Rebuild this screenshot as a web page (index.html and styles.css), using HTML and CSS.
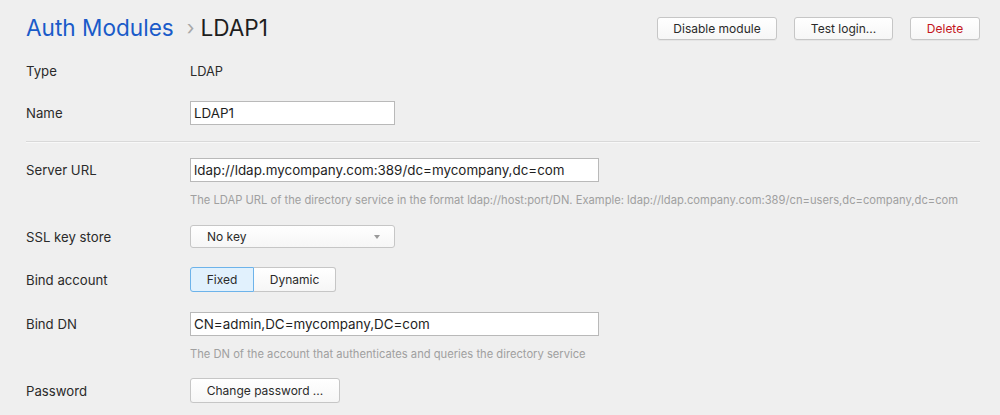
FILE: index.html
```html
<!DOCTYPE html>
<html>
<head>
<meta charset="utf-8">
<link rel="stylesheet" href="styles.css">
</head>
<body>
<div class="page">
  <header class="header">
    <h1 class="title"><span class="crumb">Auth Modules</span><span class="sep">›</span><span class="current">LDAP1</span></h1>
    <div class="actions">
      <button class="btn btn-disable">Disable module</button>
      <button class="btn btn-test">Test login...</button>
      <button class="btn btn-delete">Delete</button>
    </div>
  </header>

  <div class="row row-type">
    <div class="label">Type</div>
    <div class="value">LDAP</div>
  </div>
  <div class="row row-name">
    <div class="label">Name</div>
    <input class="input input-short" type="text" value="LDAP1">
  </div>

  <div class="divider"></div>

  <div class="row row-url">
    <div class="label">Server URL</div>
    <input class="input input-long" type="text" value="ldap://ldap.mycompany.com:389/dc=mycompany,dc=com">
  </div>
  <div class="help help-url">The LDAP URL of the directory service in the format ldap://host:port/DN. Example: ldap://ldap.company.com:389/cn=users,dc=company,dc=com</div>

  <div class="row row-ssl">
    <div class="label">SSL key store</div>
    <div class="select"><span>No key</span><span class="caret"></span></div>
  </div>

  <div class="row row-bind">
    <div class="label">Bind account</div>
    <div class="segmented">
      <button class="seg seg-active">Fixed</button><button class="seg">Dynamic</button>
    </div>
  </div>

  <div class="row row-dn">
    <div class="label">Bind DN</div>
    <input class="input input-long" type="text" value="CN=admin,DC=mycompany,DC=com">
  </div>
  <div class="help help-dn">The DN of the account that authenticates and queries the directory service</div>

  <div class="row row-pass">
    <div class="label">Password</div>
    <button class="btn btn-pass">Change password ...</button>
  </div>
</div>
</body>
</html>
```
FILE: styles.css
```css
* { box-sizing: border-box; }
html, body {
  margin: 0;
  padding: 0;
  background: #efefef;
}
body {
  font-family: Inter, "Liberation Sans", sans-serif;
  font-size: 12px;
  color: #2a2a2a;
}
.page {
  padding: 0 20px 0 26px;
}
.header {
  display: flex;
  justify-content: space-between;
  align-items: flex-start;
  height: 56px;
}
.title {
  margin: 13px 0 0 0;
  font-weight: 400;
  font-size: 22.6px;
  line-height: 30px;
  display: flex;
  align-items: center;
}
.crumb { color: #1a5bc9; }
.sep {
  color: #a8a8a8;
  font-size: 20px;
  margin: 0 6px 0 13px;
}
.current { color: #1e1e1e; }
.actions {
  display: flex;
  gap: 17px;
  margin-top: 17px;
}
.btn {
  font-family: inherit;
  font-size: 12px;
  color: #2a2a2a;
  height: 23px;
  padding: 0 15px;
  border: 1px solid #c6c6c6;
  border-radius: 3px;
  background: linear-gradient(#ffffff, #f6f6f6);
  box-shadow: 0 1px 0 rgba(0,0,0,0.04);
}
.btn-disable { width: 120px; }
.btn-test { width: 99px; }
.btn-delete { width: 70px; color: #c4161c; }

.row {
  display: flex;
  align-items: center;
}
.label {
  width: 164px;
  flex: none;
  font-size: 13.2px;
  color: #2a2a2a;
}
.value { font-size: 12.8px; }
.row-type { height: 24px; margin-top: 3px; }
.row-name { height: 24px; margin-top: 18px; }
.divider {
  height: 1px;
  background: #d9d9d9;
  border-bottom: 1px solid #f8f8f8;
  margin-top: 16px;
  box-sizing: content-box;
}
.row-url { height: 24px; margin-top: 15px; }
.input {
  font-family: inherit;
  font-size: 13.4px;
  color: #1e1e1e;
  height: 24px;
  border: 1px solid #b9b9b9;
  background: #fff;
  padding: 0 3px;
  outline: none;
}
.input-short { width: 205px; }
.input-long { width: 409px; }
.help {
  margin-left: 164px;
  font-size: 11.2px;
  color: #a0a0a0;
  line-height: 14px;
}
.help-url { margin-top: 11px; }
.row-ssl { height: 23px; margin-top: 18px; }
.select {
  width: 205px;
  height: 23px;
  border: 1px solid #c6c6c6;
  border-radius: 3px;
  background: linear-gradient(#ffffff, #f6f6f6);
  display: flex;
  align-items: center;
  justify-content: space-between;
  padding: 0 14px 0 16px;
  font-size: 12px;
}
.caret {
  width: 0;
  height: 0;
  border-left: 3.5px solid transparent;
  border-right: 3.5px solid transparent;
  border-top: 4px solid #9a9a9a;
}
.row-bind { height: 25px; margin-top: 19px; }
.segmented { display: flex; }
.seg {
  font-family: inherit;
  font-size: 12px;
  color: #2a2a2a;
  height: 25px;
  border: 1px solid #c6c6c6;
  background: linear-gradient(#ffffff, #f6f6f6);
  padding: 0;
  width: 82px;
  border-radius: 0 3px 3px 0;
  border-left: none;
}
.seg-active {
  width: 64px;
  border: 1px solid #6db3ea;
  background: #e1f1fd;
  border-radius: 3px 0 0 3px;
}
.row-dn { height: 24px; margin-top: 20px; }
.help-dn { margin-top: 11px; }
.row-pass { height: 25px; margin-top: 17px; }
.btn-pass { width: 150px; height: 25px; padding: 0; }
```
